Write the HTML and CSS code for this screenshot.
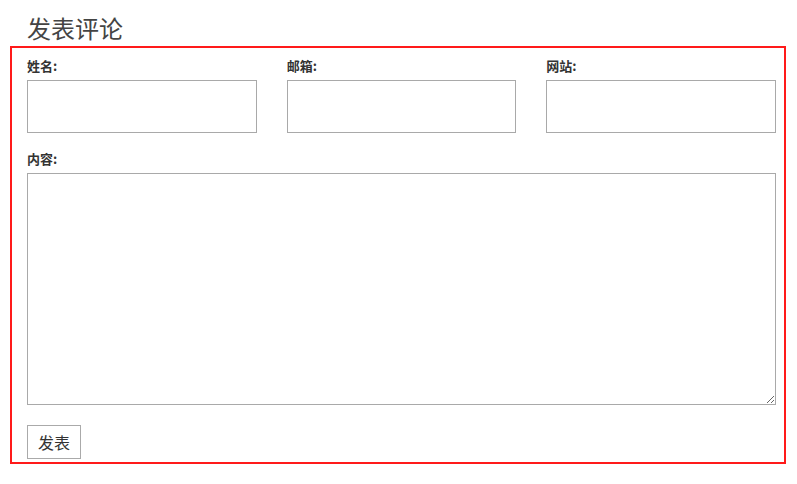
FILE: index.html
```html
<!DOCTYPE html>
<html lang="zh">
<head>
<meta charset="utf-8">
<link rel="stylesheet" href="styles.css">
</head>
<body>
<div class="page">
  <h3 class="title">发表评论</h3>
  <form class="comment-form">
    <div class="row">
      <div class="field">
        <label class="label">姓名:</label>
        <input class="input" type="text">
      </div>
      <div class="field">
        <label class="label">邮箱:</label>
        <input class="input" type="text">
      </div>
      <div class="field">
        <label class="label">网站:</label>
        <input class="input" type="text">
      </div>
    </div>
    <div class="field content-field">
      <label class="label">内容:</label>
      <textarea class="textarea"></textarea>
    </div>
    <div class="actions">
      <button class="submit" type="button">发表</button>
    </div>
  </form>
</div>
</body>
</html>
```
FILE: styles.css
```css
* { box-sizing: border-box; }
html, body {
  margin: 0;
  padding: 0;
  background: #fff;
}
body {
  font-family: "Noto Sans CJK SC", "Liberation Sans", sans-serif;
  color: #333;
}
.page {
  padding: 0 11px 0 10px;
}
.title {
  margin: 16px 0 6px 17px;
  font-size: 24px;
  line-height: 24px;
  font-weight: normal;
  color: #444;
}
.comment-form {
  width: 776px;
  height: 418px;
  border: 2px solid #ff1a1a;
  padding: 8px 8px 0 15px;
}
.row {
  display: grid;
  grid-template-columns: 1fr 1fr 1fr;
  column-gap: 30px;
}
.field {
  display: flex;
  flex-direction: column;
}
.label {
  font-size: 13px;
  line-height: 20px;
  font-weight: bold;
  color: #333;
  margin-bottom: 4px;
}
.input {
  height: 53px;
  border: 1px solid #a9a9a9;
  margin: 0;
  padding: 0 6px;
  font: inherit;
  background: #fff;
}
.content-field {
  margin-top: 16px;
}
.textarea {
  height: 232px;
  width: 100%;
  border: 1px solid #a9a9a9;
  margin: 0;
  padding: 4px;
  font: inherit;
  background: #fff;
  display: block;
}
.actions {
  margin-top: 20px;
}
.submit {
  width: 54px;
  height: 34px;
  border: 1px solid #aaa;
  background: #fff;
  color: #333;
  font-family: "Noto Sans CJK SC", sans-serif;
  font-size: 16px;
  padding: 0;
  border-radius: 0;
}
```
